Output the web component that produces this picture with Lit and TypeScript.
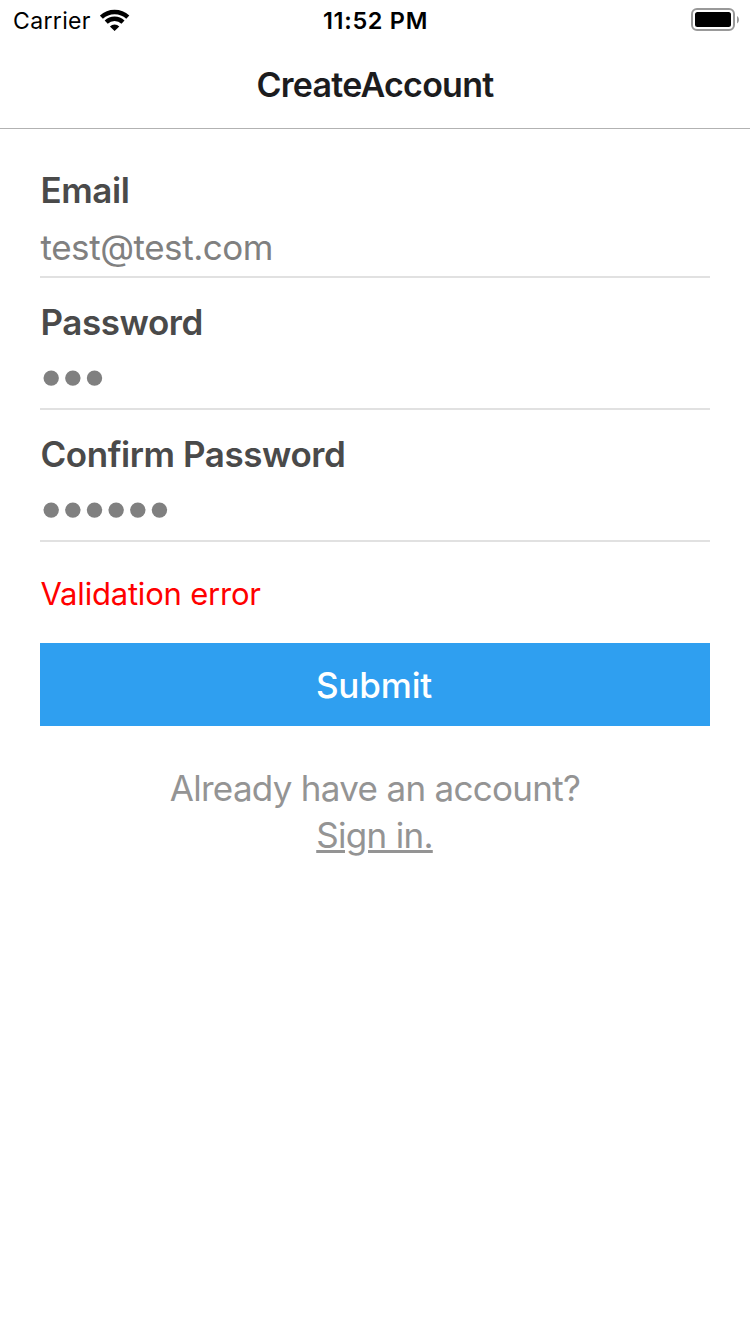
import { LitElement, html, svg, css } from "lit";
import { customElement, property } from "lit/decorators.js";

@customElement("status-bar")
class StatusBar extends LitElement {
  static styles = css`
    :host { display: grid; grid-template-columns: 1fr auto 1fr; align-items: center; height: 40px; font-size: 23px; line-height: 38px; color: #000; }
    .left { display: flex; align-items: center; gap: 9px; padding-left: 13px; }
    .carrier { letter-spacing: 0.35px; padding-top: 2px; }
    .time { font-size: 23.5px; font-weight: 600; letter-spacing: 0.7px; padding: 2px 0 0 1px; }
    .right { display: flex; justify-content: flex-end; padding-right: 10px; }
    svg { display: block; }
  `;
  render() {
    return html`
      <div class="left">
        <span class="carrier">Carrier</span>
        <svg width="30" height="22" viewBox="0 0 30 22">
          <g fill="none" stroke="#000" stroke-width="4.4">
            <path d="M1.4 8.2A19.2 19.2 0 0 1 27.8 8.2" />
            <path d="M6.2 13.2A12.1 12.1 0 0 1 23 13.2" />
          </g>
          <path d="M14.6 22L9.9 17.5A6.8 6.8 0 0 1 19.3 17.5Z" />
        </svg>
      </div>
      <span class="time">11:52 PM</span>
      <div class="right">
        <svg width="49" height="24" viewBox="0 0 49 24">
          <rect x="1" y="1" width="42" height="21" rx="5" fill="none" stroke="#999" stroke-width="2" />
          <rect x="4" y="4" width="36" height="15" rx="2.5" />
          <path d="M46 8v7.5c2.6-1.5 2.6-6 0-7.5Z" fill="#999" />
        </svg>
      </div>`;
  }
}

@customElement("form-field")
class FormField extends LitElement {
  @property() label = "";
  @property() value = "";
  @property({ type: Number }) dots = 0;
  static styles = css`
    :host { display: flex; flex-direction: column; height: 132px; box-sizing: border-box; border-bottom: 2px solid #e1e1e1; }
    .label { padding: 22px 0 0 0.5px; font-size: 35px; line-height: 45px; font-weight: 600; letter-spacing: -0.44px; color: #4a4a4a; white-space: nowrap; }
    .value { padding: 13px 0 0 0.5px; font-size: 35px; line-height: 42px; letter-spacing: -0.45px; color: #808080; }
    .dots { display: block; margin-top: 25px; fill: #808080; }
  `;
  render() {
    return html`
      <div class="label">${this.label}</div>
      ${this.dots
        ? html`<svg class="dots" width="160" height="16">
            ${Array.from({ length: this.dots }, (_, i) => svg`<circle cx=${11.2 + i * 21.65} cy="8.1" r="7.7" />`)}
          </svg>`
        : html`<div class="value">${this.value}</div>`}`;
  }
}

@customElement("app-root")
class AppRoot extends LitElement {
  static styles = css`
    :host { display: block; height: 1334px; background: #fff; font-family: Inter, "Liberation Sans", sans-serif; }
    .header { display: flex; justify-content: center; height: 89px; box-sizing: border-box; border-bottom: 1px solid #b2b2b2; font-size: 34px; line-height: 89px; font-weight: 600; letter-spacing: -0.72px; color: #1c1c1e; }
    .form { display: flex; flex-direction: column; padding: 17px 40px 0; }
    .error { margin-top: 32px; padding-left: 0.5px; font-size: 31px; line-height: 40px; letter-spacing: -0.2px; color: #ff0000; }
    .submit { display: flex; align-items: center; justify-content: center; margin-top: 29px; height: 83px; padding-right: 2px; background: #2f9ff0; color: #fff; font-size: 35px; font-weight: 500; letter-spacing: -0.15px; }
    .footer { margin-top: 39px; text-align: center; font-size: 35px; line-height: 47px; letter-spacing: -0.7px; color: #949494; }
    .link { text-decoration: underline; padding-right: 1px; }
  `;
  render() {
    return html`
      <status-bar></status-bar>
      <div class="header"><span class="title">CreateAccount</span></div>
      <div class="form">
        <form-field label="Email" value="test@test.com"></form-field>
        <form-field label="Password" dots="3"></form-field>
        <form-field label="Confirm Password" dots="6"></form-field>
        <div class="error"><span>Validation error</span></div>
        <div class="submit"><span>Submit</span></div>
        <div class="footer">
          <div><span>Already have an account?</span></div>
          <div><span class="link">Sign in.</span></div>
        </div>
      </div>`;
  }
}
